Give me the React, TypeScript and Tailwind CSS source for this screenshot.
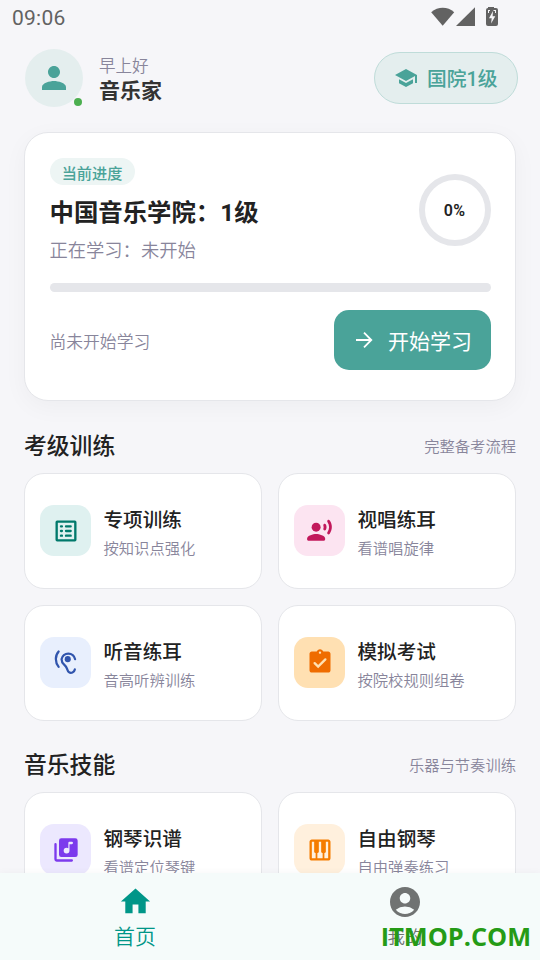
import type { ReactNode } from "react";
import { MdAccountCircle, MdHome, MdOutlinePiano, MdPerson, MdSchool } from "react-icons/md";

function VoiceIcon() {
  return (
    <svg viewBox="0 0 24 24" width="27" height="27" fill="currentColor">
      <circle cx="9" cy="9" r="4" />
      <path d="M9 15c-2.67 0-8 1.34-8 4v1c0 .55.45 1 1 1h14c.55 0 1-.45 1-1v-1c0-2.66-5.33-4-8-4z" />
      <path d="M15.47 7.77c.32.79.32 1.67 0 2.46-.19.47-.11 1 .25 1.36l.03.03c.58.58 1.57.46 1.95-.27.76-1.45.76-3.15-.02-4.66-.38-.74-1.38-.88-1.97-.29l-.01.01c-.34.35-.42.89-.23 1.36z" />
      <path d="M19.18 2.89c-.4.4-.46 1.02-.13 1.48 1.97 2.74 1.96 6.41-.03 9.25-.32.45-.25 1.07.14 1.46l.03.03c.49.49 1.32.45 1.74-.1 2.75-3.54 2.76-8.37 0-12.02-.42-.55-1.26-.59-1.75-.1z" />
    </svg>
  );
}

function EarIcon() {
  return (
    <svg viewBox="0 0 24 24" width="27" height="27" fill="none" stroke="currentColor" strokeWidth="2" strokeLinecap="round">
      <path d="M20.5 9a6.1 6.1 0 0 0-12 0c0 2 .9 3.6 2.3 4.8 1.3 1.1 2 2 2.5 3.6.6 1.8 1.1 2.7 1.7 3.1 1.9 1.4 4.8.3 5.3-2.3" />
      <path d="M5.9 2.2C2.6 5.9 2.6 12 5.9 15.9" />
      <circle cx="14" cy="9" r="2.7" fill="currentColor" stroke="none" />
    </svg>
  );
}

function ExamIcon() {
  return (
    <svg viewBox="0 0 24 24" width="28" height="28">
      <path
        fill="currentColor"
        fillRule="evenodd"
        d="M19 3h-4.18C14.4 1.84 13.3 1 12 1s-2.4.84-2.82 2H5c-1.1 0-2 .9-2 2v14c0 1.1.9 2 2 2h14c1.1 0 2-.9 2-2V5c0-1.1-.9-2-2-2zm-7 0c.55 0 1 .45 1 1s-.45 1-1 1-1-.45-1-1 .45-1 1-1z"
      />
      <path d="m7.4 13 3 3 6.2-6.2" fill="none" stroke="#ffe0b2" strokeWidth="2" strokeLinecap="round" />
    </svg>
  );
}

function ListIcon() {
  return (
    <svg viewBox="0 0 24 24" width="28" height="28" fill="none" stroke="currentColor" strokeWidth="2">
      <rect x="4" y="4" width="16" height="16" rx=".4" />
      <path d="M7.7 8h.8M7.7 12h.8M7.7 16h.8M12 8h4M12 12h4M12 16h4" strokeLinecap="round" />
    </svg>
  );
}

function ScoreIcon() {
  return (
    <svg viewBox="0 0 24 24" width="28" height="28">
      <rect x="6" y="2" width="16" height="16" rx="2" fill="currentColor" />
      <path d="M3 7v13a1 1 0 0 0 1 1h13" fill="none" stroke="currentColor" strokeWidth="2" strokeLinecap="round" />
      <path
        fill="#ece8fe"
        d="M17 7h-2v5.5a2.5 2.5 0 1 1-2.5-2.5c.57 0 1.08.19 1.5.51V6c0-.55.45-1 1-1h2a1 1 0 0 1 0 2z"
      />
    </svg>
  );
}

function StatusBar() {
  return (
    <div className="flex h-9 items-center justify-between pl-3 pr-[41px] text-[#626262]">
      <span className="text-[21px] leading-9 tracking-[0.25px]">09:06</span>
      <svg width="68" height="20" viewBox="0 0 68 20" className="mt-[-2px]" fill="currentColor">
        <path d="M0.2 5.2C7-.6 16.6-.6 23.2 5.2L11.7 18.8Z" />
        <path d="M25 19 44 0.2V19Z" />
        <path d="M57 0h6v1h2q2 0 2 2v14q0 2-2 2h-8q-2 0-2-2V3q0-2 2-2Z" />
        <path d="M62 4 58 11.2h2.7l-.6 5.2 4.2-7.2h-2.7Z" fill="#f6f6f9" />
        <path d="M57 3h2v1h-1v2h-1Zm5.5 0h2.5v3h-1V4h-1.5Z" fill="#f6f6f9" />
      </svg>
    </div>
  );
}

function Header() {
  return (
    <header className="flex h-[72px] items-center px-[24px]">
      <div className="relative -mt-[4px] ml-[1px] flex size-[58px] items-center justify-center rounded-full bg-[#e4eeee] text-[#4aa399]">
        <MdPerson size={36} />
        <span className="absolute bottom-[1px] right-[1px] size-[8px] rounded-full bg-[#4caf50]" />
      </div>
      <div className="-mt-[2px] ml-4">
        <div className="text-[16.5px] font-[350] leading-[25px] text-[#88859b]">早上好</div>
        <div className="text-[21px] font-bold leading-[25px] text-[#333]">音乐家</div>
      </div>
      <div className="-mr-[1.5px] -mt-[4px] ml-auto flex h-[52px] w-[143.5px] items-center rounded-full border-[1.5px] border-[#bfdcd9] bg-[#e4eeee] pl-[19px] text-[#4aa399]">
        <MdSchool size={24} />
        <span className="ml-[9px] mt-[3px] whitespace-nowrap text-[19.8px] font-medium leading-6">国院1级</span>
      </div>
    </header>
  );
}

function ProgressCard() {
  return (
    <section className="mx-[24px] mt-[24px] h-[269px] rounded-[24px] border-[1.5px] border-[#e5e6ea] bg-white px-[24.5px] pt-[25px] shadow-[0_6px_24px_rgba(0,0,0,0.04)]">
      <div className="flex h-[107px] justify-between">
        <div>
          <div className="flex h-[27px] w-[85px] items-center justify-center rounded-full bg-[#edf5f4] text-[15.2px] font-medium text-[#4aa399]">
            <span className="mt-[4px] leading-6">当前进度</span>
          </div>
          <h1 className="mt-[10px] whitespace-nowrap text-[24.4px] font-bold leading-[36px] text-[#222]">中国音乐学院：1级</h1>
          <p className="mt-[6px] text-[18.3px] font-[350] leading-[27px] text-[#88859b]">正在学习：未开始</p>
        </div>
        <div className="mt-[16px] flex size-[72px] items-center justify-center rounded-full border-[6px] border-[#e5e6ea] text-[16px] text-[#222]">
          <span className="mt-px font-semibold tracking-[0.3px]">0%</span>
        </div>
      </div>
      <div className="mt-[18px] h-[9px] rounded-full bg-[#e5e6ea]" />
      <div className="mt-[18px] flex h-[60px] items-center justify-between">
        <span className="mt-[5px] text-[16.8px] font-[350] text-[#88859b]">尚未开始学习</span>
        <button className="flex h-[60px] w-[157px] items-center rounded-[15px] bg-[#4aa399] pl-[18px] text-white">
          <svg viewBox="0 0 24 24" width="24" height="24" fill="none" stroke="currentColor" strokeWidth="1.8">
            <path d="M4 12h15M12 4.7l7.3 7.3-7.3 7.3" />
          </svg>
          <span className="ml-[12.5px] mt-[5px] whitespace-nowrap text-[21px] font-normal">开始学习</span>
        </button>
      </div>
    </section>
  );
}

function SectionTitle({ title, note }: { title: string; note: string }) {
  return (
    <div className="mx-[24px] flex h-[40px] items-center justify-between pt-[2px]">
      <h2 className="text-[22.8px] font-medium leading-[34px] text-[#222]">{title}</h2>
      <span className="text-[15.3px] font-[350] leading-6 text-[#88859b]">{note}</span>
    </div>
  );
}

function Tile({ icon, tint, title, note }: { icon: ReactNode; tint: string; title: string; note: string }) {
  return (
    <div className="flex h-[116px] items-center rounded-[20px] border-[1.5px] border-[#e5e6ea] bg-white pb-px pl-[15px]">
      <div className={`flex size-[51px] items-center justify-center rounded-[14px] ${tint}`}>{icon}</div>
      <div className="ml-[12.5px] mt-[8px]">
        <div className="text-[19.6px] font-medium leading-[30px] text-[#222]">{title}</div>
        <div className="text-[15.3px] font-[350] leading-[27px] text-[#88859b]">{note}</div>
      </div>
    </div>
  );
}

function BottomNav() {
  return (
    <nav className="relative flex h-[87px] shrink-0 bg-[#f5fbfa] shadow-[0_0_8px_rgba(0,0,0,0.04)]">
      <div className="flex flex-1 flex-col items-center pt-[11px] text-[#009688]">
        <MdHome size={35} />
        <span className="mt-[3px] text-[21px] font-[350] leading-[30px]">首页</span>
      </div>
      <div className="flex flex-1 flex-col items-center pt-[11px] text-[#707372]">
        <MdAccountCircle size={36} />
        <span className="mt-[2px] text-[17.5px] font-[350] leading-[30px]">我的</span>
      </div>
      <span className="absolute right-[9px] top-[45px] whitespace-nowrap font-['Open_Sans','Noto_Sans',sans-serif] text-[25.3px] font-bold leading-9 text-[#259b16]">
        ITMOP.COM
      </span>
    </nav>
  );
}

export default function App() {
  return (
    <div className="flex h-[960px] w-[540px] flex-col overflow-hidden bg-[#f6f6f9] font-[Roboto,'Noto_Sans_CJK_SC',sans-serif]">
      <main className="min-h-0 flex-1 overflow-hidden">
        <StatusBar />
        <div className="h-[8px]" />
        <Header />
        <div className="-mt-[8px]">
          <ProgressCard />
        </div>
        <div className="h-[25px]" />
        <SectionTitle title="考级训练" note="完整备考流程" />
        <div className="mx-[24px] mt-[7px] grid grid-cols-2 gap-x-[16px] gap-y-[15.5px]">
          <Tile icon={<ListIcon />} tint="bg-[#dff1f0] text-[#00796b]" title="专项训练" note="按知识点强化" />
          <Tile icon={<VoiceIcon />} tint="bg-[#fce4f1] text-[#c2185b]" title="视唱练耳" note="看谱唱旋律" />
          <Tile icon={<EarIcon />} tint="bg-[#e8effd] text-[#3155ad]" title="听音练耳" note="音高听辨训练" />
          <Tile icon={<ExamIcon />} tint="bg-[#ffe0b2] text-[#ef6c00]" title="模拟考试" note="按院校规则组卷" />
        </div>
        <div className="h-[24.5px]" />
        <SectionTitle title="音乐技能" note="乐器与节奏训练" />
        <div className="mx-[24px] mt-[7px] grid grid-cols-2 gap-x-[16px]">
          <Tile icon={<ScoreIcon />} tint="bg-[#ece8fe] text-[#7c3aed]" title="钢琴识谱" note="看谱定位琴键" />
          <Tile icon={<MdOutlinePiano size={28} />} tint="bg-[#fff0dd] text-[#f57c00]" title="自由钢琴" note="自由弹奏练习" />
        </div>
      </main>
      <BottomNav />
    </div>
  );
}
